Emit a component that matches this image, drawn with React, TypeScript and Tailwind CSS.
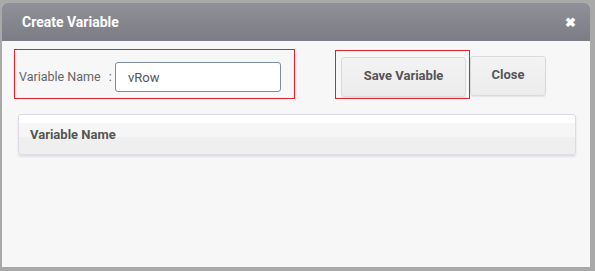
import React, { useState } from 'react';

const App: React.FC = () => {
  const [name, setName] = useState('vRow');

  return (
    <div
      className="w-[595px] h-[271px] bg-[#a9a9a9] pt-[3px] pl-[2px] pr-[5px] pb-[4px]"
      style={{ fontFamily: 'Roboto, "Liberation Sans", sans-serif' }}
    >
      <div className="h-full rounded-t-[5px] bg-[#f7f7f7] flex flex-col overflow-hidden">
        {/* Header */}
        <div className="h-[38px] shrink-0 flex items-center justify-between pl-[20px] pr-[14px] bg-gradient-to-b from-[#909198] to-[#7c7d84]">
          <h1 className="text-white font-bold text-[14px]">Create Variable</h1>
          <button className="text-white text-[13px] leading-none font-bold">✖</button>
        </div>

        {/* Form row */}
        <div className="flex items-start pt-[8px] pl-[12px]">
          <div className="w-[281px] h-[50px] shrink-0 border border-[#e3202b] flex items-start pl-[4px] pt-[12px]">
            <label className="w-[96px] h-[30px] shrink-0 flex items-center whitespace-nowrap text-[12.5px] text-[#666]">
              Variable Name
              <span className="ml-[8px]">:</span>
            </label>
            <input
              className="w-[166px] h-[30px] shrink-0 bg-white border border-[#7f8c99] rounded-[3px] px-[12px] text-[13px] text-[#555] outline-none"
              value={name}
              onChange={(e) => setName(e.target.value)}
            />
          </div>
          <div className="ml-[40px] mt-[1px] w-[135px] h-[49px] shrink-0 border border-[#e3202b] pl-[5px] pt-[6px]">
            <button className="w-[125px] h-[40px] pb-[3px] rounded-[3px] border border-[#dadada] bg-gradient-to-b from-[#f3f3f3] to-[#ececec] shadow-[0_1px_1px_rgba(0,0,0,0.08)] text-[13px] font-bold text-[#555]">
              Save Variable
            </button>
          </div>
          <button className="mt-[7px] w-[76px] h-[40px] pb-[3px] shrink-0 rounded-[3px] border border-[#dadada] bg-gradient-to-b from-[#f3f3f3] to-[#ececec] shadow-[0_1px_1px_rgba(0,0,0,0.08)] text-[13px] font-bold text-[#555]">
            Close
          </button>
        </div>

        {/* Table header */}
        <div className="ml-[16px] mr-[14px] mt-[15px] h-[41px] rounded-[3px] border border-[#dcdce6] shadow-[0_2px_2px_rgba(180,180,200,0.35)] bg-[linear-gradient(to_bottom,#ffffff_0%,#ffffff_20%,#f6f6f6_21%,#f6f6f6_55%,#efefef_56%,#efefef_100%)] flex items-center pl-[11px]">
          <span className="text-[13px] font-bold text-[#555]">Variable Name</span>
        </div>
      </div>
    </div>
  );
};

export default App;
